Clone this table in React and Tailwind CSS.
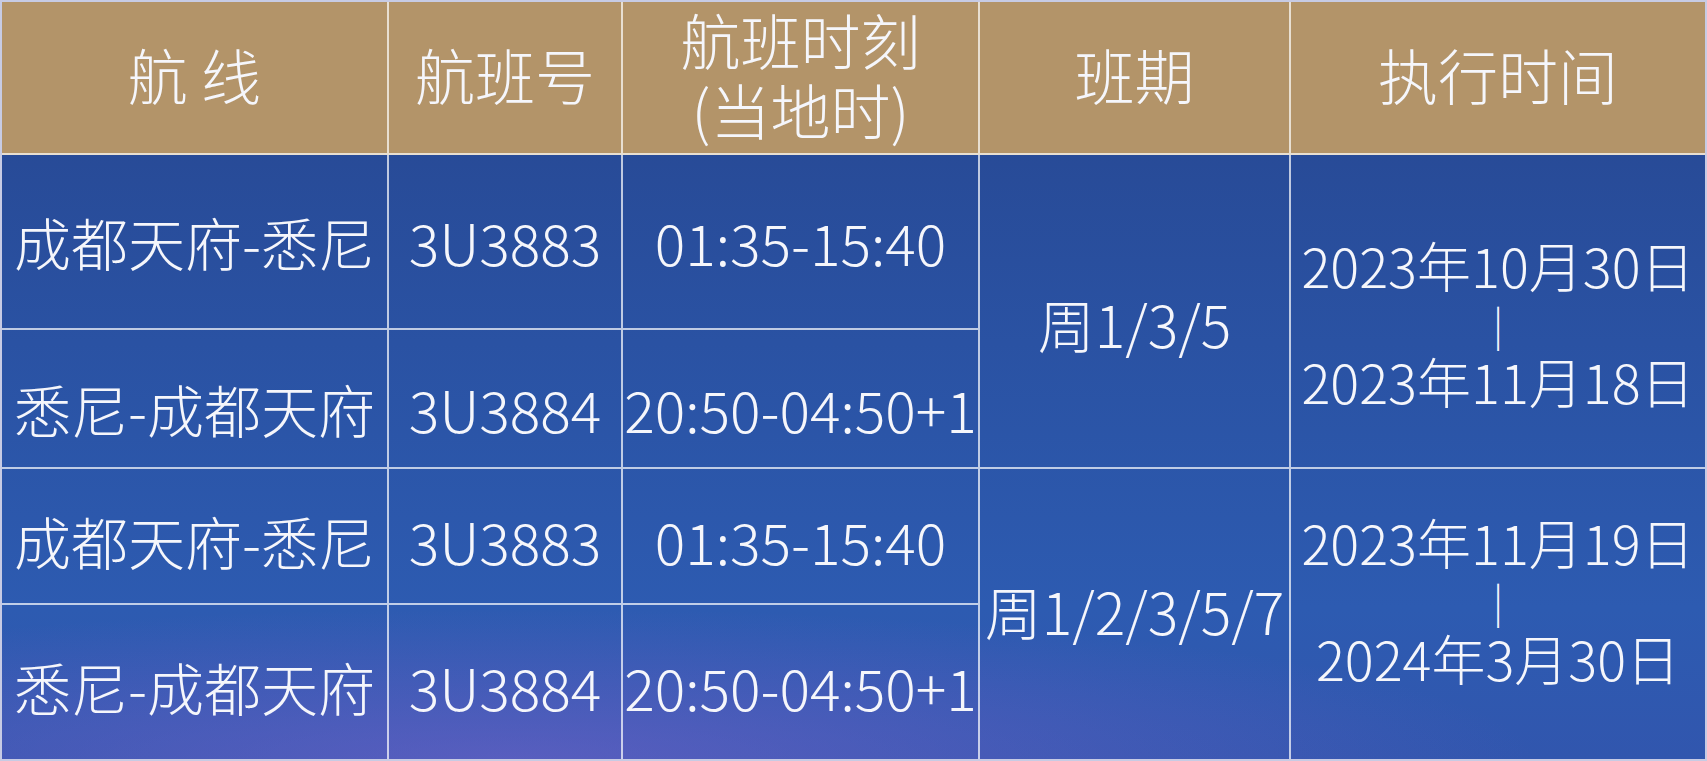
const rows = [
  { route: '成都天府-悉尼', flight: '3U3883', time: '01:35-15:40', pad: 'pt-0' },
  { route: '悉尼-成都天府', flight: '3U3884', time: '20:50-04:50+1', pad: 'pt-5' },
  { route: '成都天府-悉尼', flight: '3U3883', time: '01:35-15:40', pad: 'pt-2' },
  { route: '悉尼-成都天府', flight: '3U3884', time: '20:50-04:50+1', pad: 'pt-2' },
]

const periods = [
  { days: '周1/3/5', from: '2023年10月30日', to: '2023年11月18日', dayPad: 'pt-6', datePad: 'pt-6' },
  { days: '周1/2/3/5/7', from: '2023年11月19日', to: '2024年3月30日', dayPad: 'pb-2', datePad: 'pb-7' },
]

const line = 'border-white/70'
const head = `bg-[#b39469] border-b-2 ${line} flex items-center justify-center text-[60px] pb-2`

const App = () => {
  return (
    <div className="w-[1707px] h-[761px] overflow-hidden font-['Noto_Sans_CJK_SC',sans-serif] font-light text-[#f5f6fb]">
      <div className="w-full h-full border-2 border-[#c7cbe4] grid grid-cols-[387px_234px_357px_311px_414px] grid-rows-[153px_175px_139px_136px_154px] bg-[radial-gradient(ellipse_60%_20%_at_30%_100%,rgba(120,100,205,0.55),rgba(120,100,205,0)_100%),linear-gradient(180deg,#26458e_0%,#2a52a3_45%,#2d5bb1_80%,#3156ae_100%)]">
        {/* header */}
        <div className={`${head} border-r-2 leading-none`}>航 线</div>
        <div className={`${head} border-r-2 leading-none`}>航班号</div>
        <div className={`${head} border-r-2 flex-col`}>
          <span className="leading-[70px]">航班时刻</span>
          <span className="leading-[70px]">(当地时)</span>
        </div>
        <div className={`${head} border-r-2 leading-none`}>班期</div>
        <div className={`${head} leading-none`}>执行时间</div>

        {rows.map((r, i) => {
          const b = i === rows.length - 1 ? '' : 'border-b-2'
          const cell = `border-r-2 ${b} ${line} flex items-center justify-center text-[57px] leading-none whitespace-nowrap ${r.pad}`
          const p = periods[Math.floor(i / 2)]
          const pb = i === 0 ? 'border-b-2' : ''
          return [
            <div key={`r${i}`} className={cell}>{r.route}</div>,
            <div key={`f${i}`} className={cell}>{r.flight}</div>,
            <div key={`t${i}`} className={cell}>{r.time}</div>,
            i % 2 === 0 ? (
              <div key={`d${i}`} className={`row-span-2 border-r-2 ${pb} ${line} flex items-center justify-center text-[57px] leading-none whitespace-nowrap ${p.dayPad}`}>
                {p.days}
              </div>
            ) : null,
            i % 2 === 0 ? (
              <div key={`p${i}`} className={`row-span-2 ${pb} ${line} flex flex-col items-center justify-center text-[54px] whitespace-nowrap ${p.datePad}`}>
                <span className="leading-[58px]">{p.from}</span>
                <span className="text-[40px] leading-[58px]">|</span>
                <span className="leading-[58px]">{p.to}</span>
              </div>
            ) : null,
          ]
        })}
      </div>
    </div>
  )
}

export default App
